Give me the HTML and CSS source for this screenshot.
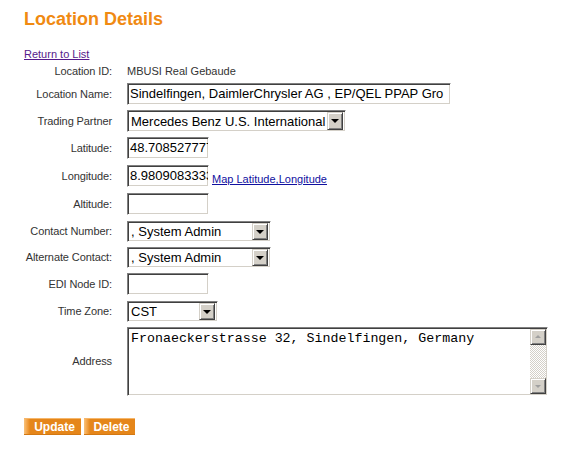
FILE: index.html
```html
<!DOCTYPE html>
<html>
<head>
<meta charset="utf-8">
<link rel="stylesheet" href="styles.css">
</head>
<body>
<div class="page">
  <h1 class="title">Location Details</h1>
  <a class="back" href="#">Return to List</a>
  <div class="form">
    <div class="lbl">Location ID:</div>
    <div class="val txt">MBUSI Real Gebaude</div>

    <div class="lbl">Location Name:</div>
    <div class="cell h22"><div class="inp w-name">Sindelfingen, DaimlerChrysler AG , EP/QEL PPAP Gro</div></div>

    <div class="lbl">Trading Partner</div>
    <div class="cell h22"><div class="sel w-tp h22"><span class="sel-text">Mercedes Benz U.S. International</span><span class="arrow"></span></div></div>

    <div class="lbl">Latitude:</div>
    <div class="cell h23"><div class="inp w-sm">48.708527777</div></div>

    <div class="lbl">Longitude:</div>
    <div class="cell h23 row"><div class="inp w-sm">8.9809083333</div><a class="map" href="#">Map Latitude,Longitude</a></div>

    <div class="lbl">Altitude:</div>
    <div class="cell h23"><div class="inp w-sm"></div></div>

    <div class="lbl">Contact Number:</div>
    <div class="cell h21"><div class="sel w-ct"><span class="sel-text">, System Admin</span><span class="arrow"></span></div></div>

    <div class="lbl">Alternate Contact:</div>
    <div class="cell h21"><div class="sel w-ct"><span class="sel-text">, System Admin</span><span class="arrow"></span></div></div>

    <div class="lbl">EDI Node ID:</div>
    <div class="cell h23"><div class="inp w-sm"></div></div>

    <div class="lbl">Time Zone:</div>
    <div class="cell h21"><div class="sel w-tz"><span class="sel-text">CST</span><span class="arrow"></span></div></div>

    <div class="lbl">Address</div>
    <div class="cell">
      <div class="area">
        <div class="area-text">Fronaeckerstrasse 32, Sindelfingen, Germany</div>
        <div class="vscroll">
          <span class="sbtn up"></span>
          <span class="track"></span>
          <span class="sbtn down"></span>
        </div>
      </div>
    </div>
  </div>
  <div class="buttons">
    <a class="btn w-up" href="#">Update</a>
    <a class="btn w-del" href="#">Delete</a>
  </div>
</div>
</body>
</html>
```

FILE: styles.css
```css
html, body {
  margin: 0;
  padding: 0;
  background: #fff;
}
body {
  font-family: "Liberation Sans", Arial, sans-serif;
  color: #333;
}
.page {
  padding: 9px 0 0 24px;
}
.title {
  margin: 0;
  font-size: 18px;
  line-height: 21px;
  font-weight: bold;
  color: #f08a12;
}
.back {
  display: block;
  width: max-content;
  margin-top: 18px;
  font-size: 11px;
  line-height: 13px;
  color: #551a8b;
  text-decoration: underline;
}
.form {
  margin-top: 4px;
  display: grid;
  grid-template-columns: 88px auto;
  column-gap: 15px;
  row-gap: 5px;
  align-items: center;
}
.lbl {
  text-align: right;
  font-size: 11px;
  line-height: 13px;
  letter-spacing: -0.1px;
  color: #333;
  white-space: nowrap;
}
.txt {
  font-size: 11px;
  line-height: 13px;
  color: #333;
}
.cell {
  display: flex;
  align-items: flex-start;
}
.h21 { height: 21px; }
.h22 { height: 22px; }
.h23 { height: 23px; }
.row { align-items: flex-start; }

.inp {
  box-sizing: border-box;
  height: 22px;
  border: 1px solid;
  border-color: #808080 #fff #fff #808080;
  box-shadow: inset 1px 1px 0 #404040, inset -1px -1px 0 #d4d0c8;
  background: #fff;
  font-size: 13px;
  line-height: 18px;
  padding: 1px 0 0 2px;
  color: #000;
  white-space: nowrap;
  overflow: hidden;
}
.w-name { width: 324px; }
.w-sm { width: 82px; }

.map {
  align-self: flex-end;
  margin-left: 3px;
  margin-bottom: 2px;
  font-size: 11px;
  line-height: 13px;
  color: #1010a0;
  text-decoration: underline;
}

.sel {
  box-sizing: border-box;
  height: 21px;
  display: flex;
  align-items: center;
  border: 1px solid;
  border-color: #808080 #fff #fff #808080;
  box-shadow: inset 1px 1px 0 #404040, inset -1px -1px 0 #d4d0c8;
  background: #fff;
  padding: 2px 2px 2px 3px;
  color: #000;
  font-size: 13px;
}
.sel.h22 { height: 22px; }
.sel-text {
  flex: 1;
  white-space: nowrap;
  overflow: hidden;
  line-height: 17px;
}
.w-tp { width: 219px; }
.w-ct { width: 144px; }
.w-tz { width: 91px; }

.arrow {
  position: relative;
  flex: none;
  box-sizing: border-box;
  width: 16px;
  height: 17px;
  background: #d4d0c8;
  border: 1px solid;
  border-color: #d4d0c8 #404040 #404040 #d4d0c8;
  box-shadow: inset 1px 1px 0 #fff, inset -1px -1px 0 #808080;
}
.arrow::after {
  content: "";
  position: absolute;
  left: 3px;
  top: 6px;
  border-left: 4px solid transparent;
  border-right: 4px solid transparent;
  border-top: 4px solid #000;
}
.sel.h22 .arrow { height: 18px; }

.area {
  box-sizing: border-box;
  width: 421px;
  height: 69px;
  display: flex;
  border: 1px solid;
  border-color: #808080 #fff #fff #808080;
  box-shadow: inset 1px 1px 0 #404040, inset -1px -1px 0 #d4d0c8;
  background: #fff;
  padding: 1px;
}
.area-text {
  flex: 1;
  font-family: "Liberation Mono", "Courier New", monospace;
  font-size: 13.3px;
  line-height: 15px;
  color: #000;
  padding: 2px 0 0 2px;
  white-space: pre;
  overflow: hidden;
}
.vscroll {
  width: 16px;
  display: flex;
  flex-direction: column;
}
.track {
  flex: 1;
  background-color: #eeedea;
  background-image: repeating-conic-gradient(#d4d0c8 0 25%, #fff 0 50%);
  background-size: 2px 2px;
}
.sbtn {
  position: relative;
  box-sizing: border-box;
  height: 16px;
  background: #d4d0c8;
  border: 1px solid;
  border-color: #d4d0c8 #404040 #404040 #d4d0c8;
  box-shadow: inset 1px 1px 0 #fff, inset -1px -1px 0 #808080;
}
.sbtn::after {
  content: "";
  position: absolute;
  left: 4px;
  border-left: 3px solid transparent;
  border-right: 3px solid transparent;
}
.sbtn.up::after {
  top: 5px;
  border-bottom: 3px solid #a0a0a0;
}
.sbtn.down::after {
  top: 6px;
  border-top: 3px solid #a0a0a0;
}

.buttons {
  margin-top: 22px;
  display: flex;
  gap: 3px;
}
.btn {
  box-sizing: border-box;
  height: 17px;
  display: flex;
  align-items: center;
  justify-content: center;
  padding-left: 4px;
  font-size: 12px;
  font-weight: bold;
  color: #fff;
  text-decoration: none;
  background: linear-gradient(to right, #f8c27c 0, #f3a448 3px, #e5861a 6px, #e5861a 100%);
  border-top: 1px solid #f6b66a;
  border-bottom: 1px solid #d37812;
}
.w-up { width: 57px; }
.w-del { width: 51px; }
```
